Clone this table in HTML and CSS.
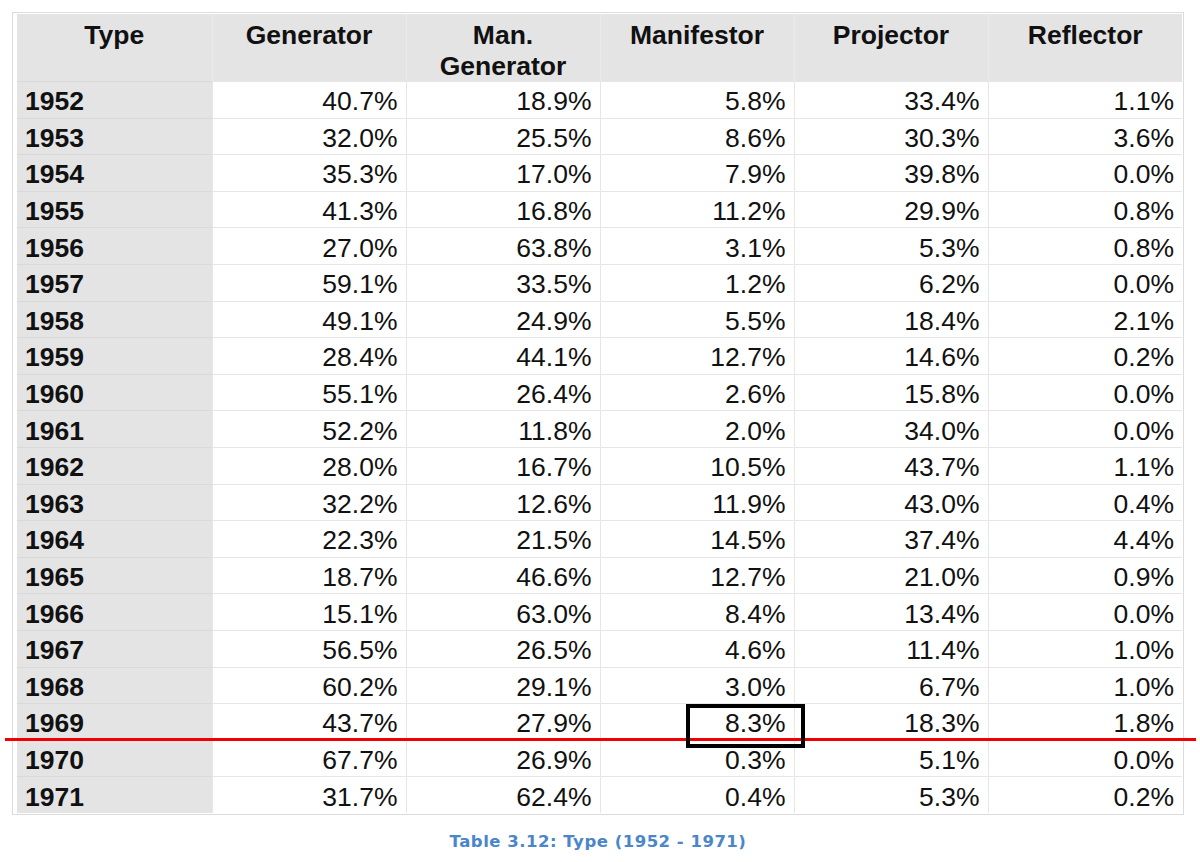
FILE: index.html
```html
<!DOCTYPE html>
<html>
<head>
<meta charset="utf-8">
<link rel="stylesheet" href="styles.css">
</head>
<body>
<div class="page">
  <figure class="figure">
    <div class="frame">
      <table class="types">
        <thead>
          <tr>
            <th>Type</th>
            <th>Generator</th>
            <th>Man.<br>Generator</th>
            <th>Manifestor</th>
            <th>Projector</th>
            <th>Reflector</th>
          </tr>
        </thead>
        <tbody>
          <tr><th>1952</th><td>40.7%</td><td>18.9%</td><td>5.8%</td><td>33.4%</td><td>1.1%</td></tr>
          <tr><th>1953</th><td>32.0%</td><td>25.5%</td><td>8.6%</td><td>30.3%</td><td>3.6%</td></tr>
          <tr><th>1954</th><td>35.3%</td><td>17.0%</td><td>7.9%</td><td>39.8%</td><td>0.0%</td></tr>
          <tr><th>1955</th><td>41.3%</td><td>16.8%</td><td>11.2%</td><td>29.9%</td><td>0.8%</td></tr>
          <tr><th>1956</th><td>27.0%</td><td>63.8%</td><td>3.1%</td><td>5.3%</td><td>0.8%</td></tr>
          <tr><th>1957</th><td>59.1%</td><td>33.5%</td><td>1.2%</td><td>6.2%</td><td>0.0%</td></tr>
          <tr><th>1958</th><td>49.1%</td><td>24.9%</td><td>5.5%</td><td>18.4%</td><td>2.1%</td></tr>
          <tr><th>1959</th><td>28.4%</td><td>44.1%</td><td>12.7%</td><td>14.6%</td><td>0.2%</td></tr>
          <tr><th>1960</th><td>55.1%</td><td>26.4%</td><td>2.6%</td><td>15.8%</td><td>0.0%</td></tr>
          <tr><th>1961</th><td>52.2%</td><td>11.8%</td><td>2.0%</td><td>34.0%</td><td>0.0%</td></tr>
          <tr><th>1962</th><td>28.0%</td><td>16.7%</td><td>10.5%</td><td>43.7%</td><td>1.1%</td></tr>
          <tr><th>1963</th><td>32.2%</td><td>12.6%</td><td>11.9%</td><td>43.0%</td><td>0.4%</td></tr>
          <tr><th>1964</th><td>22.3%</td><td>21.5%</td><td>14.5%</td><td>37.4%</td><td>4.4%</td></tr>
          <tr><th>1965</th><td>18.7%</td><td>46.6%</td><td>12.7%</td><td>21.0%</td><td>0.9%</td></tr>
          <tr><th>1966</th><td>15.1%</td><td>63.0%</td><td>8.4%</td><td>13.4%</td><td>0.0%</td></tr>
          <tr><th>1967</th><td>56.5%</td><td>26.5%</td><td>4.6%</td><td>11.4%</td><td>1.0%</td></tr>
          <tr><th>1968</th><td>60.2%</td><td>29.1%</td><td>3.0%</td><td>6.7%</td><td>1.0%</td></tr>
          <tr><th>1969</th><td>43.7%</td><td>27.9%</td><td>8.3%</td><td>18.3%</td><td>1.8%</td></tr>
          <tr><th>1970</th><td>67.7%</td><td>26.9%</td><td>0.3%</td><td>5.1%</td><td>0.0%</td></tr>
          <tr><th>1971</th><td>31.7%</td><td>62.4%</td><td>0.4%</td><td>5.3%</td><td>0.2%</td></tr>
        </tbody>
      </table>
    </div>
    <figcaption class="caption">Table 3.12: Type (1952 - 1971)</figcaption>
    <div class="cutline"></div>
    <div class="highlight"></div>
  </figure>
</div>
</body>
</html>
```

FILE: styles.css
```css
html, body {
  margin: 0;
  padding: 0;
  background: #ffffff;
}

.page {
  width: 1200px;
  height: 862px;
  position: relative;
  overflow: hidden;
}

.figure {
  margin: 0;
  padding: 12px 0 0 12px;
}

.frame {
  width: 1165px;
  border: 1px solid #dcdcdc;
  padding: 1px 1px 1px 4px;
  background: #ffffff;
}

.types {
  width: 1165px;
  border-collapse: collapse;
  table-layout: fixed;
  font-family: "Liberation Sans", Arial, sans-serif;
  font-size: 26.5px;
  color: #111111;
}

.types thead th {
  background: #e4e4e4;
  font-weight: bold;
  text-align: center;
  vertical-align: top;
  height: 67px;
  padding: 6px 4px 0;
  line-height: 30.5px;
  border-left: 1px solid #eaeaea;
  box-sizing: border-box;
}

.types thead th:first-child {
  border-left: none;
  width: 195px;
}

.types tbody th {
  background: #e4e4e4;
  font-weight: bold;
  text-align: left;
  padding: 0 0 0 8px;
  border-top: 1px solid #d9d9d9;
}

.types tbody td {
  text-align: right;
  padding: 0 8px 0 0;
  border-top: 1px solid #e6e6e6;
  border-left: 1px solid #e6e6e6;
  background: #ffffff;
}

.types tbody tr {
  height: 36.6px;
}

.types tbody th,
.types tbody td {
  line-height: 30px;
  padding-top: 3px;
  vertical-align: middle;
}

.caption {
  width: 1172px;
  margin: 17px 0 0 0;
  text-align: center;
  font-family: "DejaVu Sans", Verdana, sans-serif;
  font-weight: bold;
  font-size: 16.5px;
  color: #4a86c9;
  letter-spacing: 0.5px;
}

.cutline {
  position: absolute;
  left: 5px;
  top: 738px;
  width: 1191px;
  height: 3px;
  background: #f00000;
}

.highlight {
  position: absolute;
  left: 686px;
  top: 704px;
  width: 111px;
  height: 36px;
  border: 4px solid #000000;
}
```
